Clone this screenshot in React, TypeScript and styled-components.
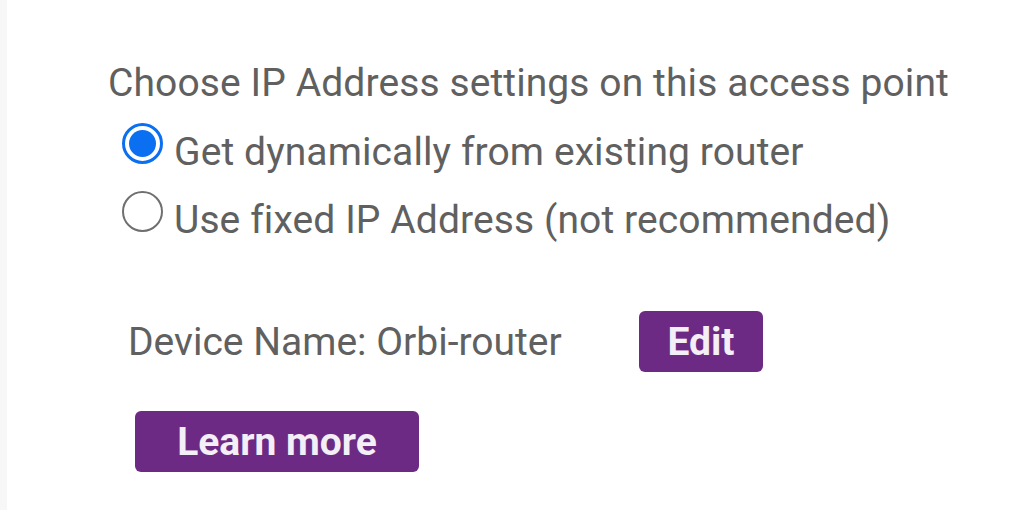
import React, { useState } from 'react'
import styled, { createGlobalStyle } from 'styled-components'

const GlobalStyle = createGlobalStyle`
  html, body {
    margin: 0;
    padding: 0;
    background: #ffffff;
  }
  body {
    font-family: Roboto, "Liberation Sans", sans-serif;
  }
`

const Page = styled.div`
  display: flex;
  width: 1034px;
  height: 510px;
  overflow: hidden;
`

const SideStrip = styled.div`
  width: 7px;
  flex-shrink: 0;
  background: #f7f7f7;
`

const Content = styled.div`
  display: flex;
  flex-direction: column;
  padding: 60px 0 0 101px;
`

const Heading = styled.div`
  font-size: 39px;
  line-height: 46px;
  letter-spacing: 0.1px;
  color: #606060;
  white-space: nowrap;
`

const RadioGroup = styled.div`
  display: flex;
  flex-direction: column;
  gap: 17px;
  margin: 18px 0 0 14px;
`

const RadioRow = styled.label`
  display: flex;
  align-items: flex-start;
  gap: 11px;
  cursor: pointer;
`

const RadioText = styled.span`
  padding-top: 5px;
  font-size: 39px;
  line-height: 46px;
  letter-spacing: 0.1px;
  color: #606060;
  white-space: nowrap;
`

const RadioCircle = styled.span<{ $checked: boolean }>`
  box-sizing: border-box;
  width: 41px;
  height: 41px;
  margin-top: -1px;
  flex-shrink: 0;
  border-radius: 50%;
  border: ${(p) => (p.$checked ? '3px solid #0a6ff0' : '2px solid #6f6f6f')};
  display: flex;
  align-items: center;
  justify-content: center;

  &::after {
    content: '';
    width: 27px;
    height: 27px;
    border-radius: 50%;
    background: #0a6ff0;
    display: ${(p) => (p.$checked ? 'block' : 'none')};
  }
`

const DeviceRow = styled.div`
  display: flex;
  align-items: center;
  margin: 68px 0 0 20px;
`

const DeviceName = styled.div`
  width: 511px;
  font-size: 39px;
  line-height: 46px;
  color: #606060;
  white-space: nowrap;
`

const PurpleButton = styled.button<{ $width: number }>`
  width: ${(p) => p.$width}px;
  height: 61px;
  padding: 0;
  border: none;
  border-radius: 6px;
  background: #6d2a84;
  color: #f4eef6;
  font-family: Roboto, "Liberation Sans", sans-serif;
  font-size: 39px;
  font-weight: 700;
  cursor: pointer;
`

const LearnWrap = styled.div`
  margin: 39px 0 0 27px;
`

const options = [
  'Get dynamically from existing router',
  'Use fixed IP Address (not recommended)',
]

export default function App() {
  const [selected, setSelected] = useState(0)

  return (
    <>
      <GlobalStyle />
      <Page>
        <SideStrip />
        <Content>
          <Heading>Choose IP Address settings on this access point</Heading>
          <RadioGroup>
            {options.map((label, i) => (
              <RadioRow key={label} onClick={() => setSelected(i)}>
                <RadioCircle $checked={selected === i} />
                <RadioText>{label}</RadioText>
              </RadioRow>
            ))}
          </RadioGroup>
          <DeviceRow>
            <DeviceName>Device Name: Orbi-router</DeviceName>
            <PurpleButton $width={124}>Edit</PurpleButton>
          </DeviceRow>
          <LearnWrap>
            <PurpleButton $width={284}>Learn more</PurpleButton>
          </LearnWrap>
        </Content>
      </Page>
    </>
  )
}
